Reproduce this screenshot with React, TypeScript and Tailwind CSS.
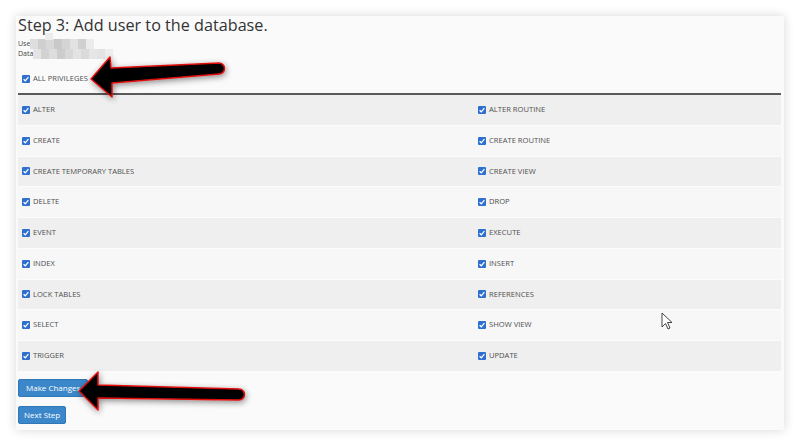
const rows: [string, string][] = [
  ['ALTER', 'ALTER ROUTINE'],
  ['CREATE', 'CREATE ROUTINE'],
  ['CREATE TEMPORARY TABLES', 'CREATE VIEW'],
  ['DELETE', 'DROP'],
  ['EVENT', 'EXECUTE'],
  ['INDEX', 'INSERT'],
  ['LOCK TABLES', 'REFERENCES'],
  ['SELECT', 'SHOW VIEW'],
  ['TRIGGER', 'UPDATE'],
];

function Check() {
  return (
    <span className="flex h-[8px] w-[8px] shrink-0 items-center justify-center rounded-[1px] bg-[#2f6fd0]">
      <svg viewBox="0 0 8 8" className="h-[8px] w-[8px]">
        <path d="M1.6 4.2 L3.3 5.8 L6.4 2.2" fill="none" stroke="#fff" strokeWidth="1.3" />
      </svg>
    </span>
  );
}

function Priv({ label }: { label: string }) {
  return (
    <div className="flex items-center gap-[3px] pl-1">
      <Check />
      <span className="text-[7.6px] leading-none text-[#505050]">{label}</span>
    </div>
  );
}

function Mosaic({ cells }: { cells: string[] }) {
  return (
    <span className="inline-flex h-[10px] align-top">
      {cells.map((c, i) => (
        <span key={i} className="h-[10px] w-[8px]" style={{ background: c }} />
      ))}
    </span>
  );
}

export default function App() {
  return (
    <div className="relative h-[446px] w-[800px] overflow-hidden bg-white pl-4 pt-4 font-['Open_Sans',sans-serif]">
      <div className="flex h-[414px] w-[768px] flex-col bg-[#fafafa] pl-[2px] pr-[3px] shadow-[0_0_10px_rgba(0,0,0,0.16)]">
        <h1 className="pt-[1px] text-[16.2px] leading-[17px] text-[#333]">Step 3: Add user to the database.</h1>
        <div className="relative mt-[5px] text-[7px] leading-[10px] text-[#444]">
          <span className="absolute left-[27px] top-[-6px] h-[7px] w-[8px] bg-[#ececec]" />
          <div className="flex">
            <span>Use</span>
            <Mosaic cells={['#dedede', '#cfcfcf', '#d8d8d8', '#c9c9c9', '#d4d4d4', '#e2e2e2', '#d0d0d0', '#ebebeb']} />
          </div>
          <div className="flex">
            <span>Data</span>
            <Mosaic cells={['#e4e4e4', '#d2d2d2', '#dddddd', '#cccccc', '#d8d8d8', '#e3e3e3', '#dadada', '#e6e6e6', '#e3e3e3', '#eeeeee']} />
          </div>
        </div>
        <div className="mt-[12px] flex h-[16px] items-center">
          <Priv label="ALL PRIVILEGES" />
        </div>
        <div className="mt-[6px] border-t-2 border-[#5a5a5a]">
          {rows.map(([a, b], i) => (
            <div
              key={a}
              className={`grid h-[30.75px] grid-cols-[456px_1fr] items-center border-b border-[#fbfbfb] ${
                i % 2 === 0 ? 'bg-[#efefef]' : 'bg-[#f7f7f7]'
              }`}
            >
              <Priv label={a} />
              <Priv label={b} />
            </div>
          ))}
        </div>
        <div className="mt-[7px] flex flex-col items-start gap-[9px]">
          <button className="h-[18px] rounded-[2px] border border-[#2f78b8] bg-[#3b87c9] px-[7px] text-[8px] leading-none text-white">
            Make Changes
          </button>
          <button className="h-[18px] rounded-[2px] border border-[#2f78b8] bg-[#3b87c9] px-[5px] text-[8px] leading-none text-white">
            Next Step
          </button>
        </div>
      </div>

      <svg className="pointer-events-none absolute inset-0" width="800" height="446" viewBox="0 0 800 446">
        <defs>
          <filter id="sh" x="-20%" y="-50%" width="140%" height="200%">
            <feGaussianBlur in="SourceAlpha" stdDeviation="3" />
            <feOffset dx="1" dy="2" result="b" />
            <feComponentTransfer>
              <feFuncA type="linear" slope="0.45" />
            </feComponentTransfer>
            <feMerge>
              <feMergeNode />
              <feMergeNode in="SourceGraphic" />
            </feMerge>
          </filter>
        </defs>
        <path
          d="M91 79 L110 57 L111 68 L219 63 A5.5 5.5 0 0 1 219 74 L112 83 L112 97 Z"
          fill="#000"
          stroke="#e01010"
          strokeWidth="1.5"
          strokeLinejoin="round"
          filter="url(#sh)"
        />
        <path
          d="M79 391 L98 372 L98 385 L239 389 A5.5 5.5 0 0 1 239 400 L98 398 L98 410 Z"
          fill="#000"
          stroke="#e01010"
          strokeWidth="1.5"
          strokeLinejoin="round"
          filter="url(#sh)"
        />
        <path
          d="M662 313 L662 327 L665.5 323.5 L668 329 L670 328 L667.5 322.5 L672 322.5 Z"
          fill="#fff"
          stroke="#333"
          strokeWidth="0.9"
          strokeLinejoin="round"
        />
      </svg>
    </div>
  );
}
